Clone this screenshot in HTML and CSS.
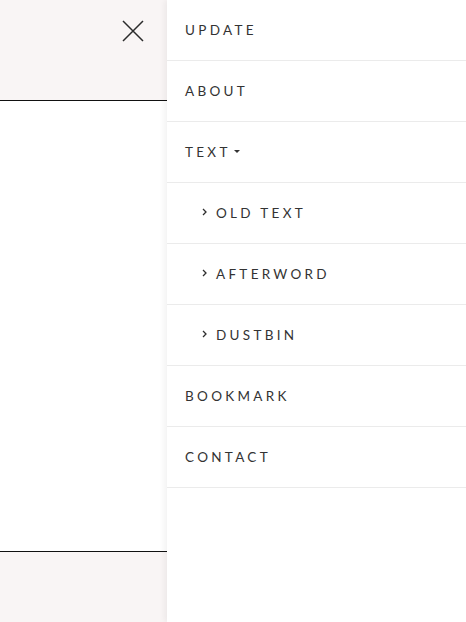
FILE: index.html
```html
<html>
<head>
    <meta charset="UTF-8">
    <link rel="stylesheet" href="styles.css">
</head>

<body>

<div class="layout">
    <div class="page">
        <div class="page_head">
            <button class="close" aria-label="close">
                <svg width="22" height="22" viewBox="0 0 22 22">
                    <path d="M1 1 L21 21 M21 1 L1 21" stroke="#2b2b2b" stroke-width="1.5" fill="none"/>
                </svg>
            </button>
        </div>
        <div class="page_body"></div>
        <div class="page_foot"></div>
    </div>

    <nav class="menu">
        <a class="item" href="#">UPDATE</a>
        <a class="item" href="#">ABOUT</a>
        <a class="item" href="#">TEXT<span class="caret"></span></a>
        <a class="item sub" href="#"><svg class="chev" width="5" height="8" viewBox="0 0 5 8"><path d="M1 1 L4 4 L1 7" stroke="#2e2e2e" stroke-width="1.3" fill="none"/></svg>OLD TEXT</a>
        <a class="item sub" href="#"><svg class="chev" width="5" height="8" viewBox="0 0 5 8"><path d="M1 1 L4 4 L1 7" stroke="#2e2e2e" stroke-width="1.3" fill="none"/></svg>AFTERWORD</a>
        <a class="item sub" href="#"><svg class="chev" width="5" height="8" viewBox="0 0 5 8"><path d="M1 1 L4 4 L1 7" stroke="#2e2e2e" stroke-width="1.3" fill="none"/></svg>DUSTBIN</a>
        <a class="item" href="#">BOOKMARK</a>
        <a class="item" href="#">CONTACT</a>
    </nav>
</div>

</body>

</html>
```

FILE: styles.css
```css
body {
    margin: 0;
    font-family: "Lato", "Noto Sans", sans-serif;
    color: #333;
}

.layout {
    display: flex;
    height: 622px;
    overflow: hidden;
}

.page {
    width: 167px;
    display: flex;
    flex-direction: column;
}

.page_head {
    height: 100px;
    background: #f9f5f5;
    border-bottom: 1px solid #111;
    display: flex;
    justify-content: flex-end;
    align-items: flex-start;
}

.page_head .close {
    margin: 20px 23px 0 0;
    padding: 0;
    border: none;
    background: none;
    width: 22px;
    height: 22px;
    cursor: pointer;
}

.page_body {
    height: 450px;
    background: #fff;
}

.page_foot {
    flex: 1;
    background: #f9f5f5;
    border-top: 1px solid #111;
}

.menu {
    flex: 1;
    background: #fff;
    display: flex;
    flex-direction: column;
    box-shadow: -3px 0 6px rgba(0, 0, 0, 0.05);
    position: relative;
}

.menu .item {
    height: 60px;
    border-bottom: 1px solid #ebebeb;
    display: flex;
    align-items: center;
    padding-left: 18px;
    font-size: 13.5px;
    letter-spacing: 3.3px;
    color: #333;
    text-decoration: none;
}

.menu .sub {
    padding-left: 35px;
}

.menu .chev {
    margin-right: 9px;
    margin-top: -2px;
}

.menu .caret {
    display: inline-block;
    width: 0;
    height: 0;
    border-left: 3px solid transparent;
    border-right: 3px solid transparent;
    border-top: 3.5px solid #333;
    margin-left: 3px;
    margin-top: -1px;
}
```
